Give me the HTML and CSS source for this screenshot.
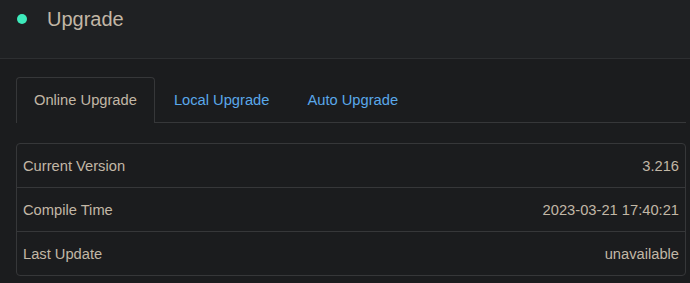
FILE: index.html
```html
<!DOCTYPE html>
<html lang="en">
<head>
    <meta charset="UTF-8">
    <meta name="viewport" content="width=device-width, initial-scale=1.0">
    <title>Upgrade</title>
    <link rel="stylesheet" href="styles.css">
</head>
<body>
    <div class="header">
        <span class="dot"></span>
        <h1>Upgrade</h1>
    </div>

    <div class="content">
        <div class="tabs">
            <a class="tab active">Online Upgrade</a>
            <a class="tab">Local Upgrade</a>
            <a class="tab">Auto Upgrade</a>
        </div>

        <div class="info">
            <div class="row">
                <span>Current Version</span>
                <span>3.216</span>
            </div>
            <div class="row">
                <span>Compile Time</span>
                <span>2023-03-21 17:40:21</span>
            </div>
            <div class="row">
                <span>Last Update</span>
                <span>unavailable</span>
            </div>
        </div>
    </div>
</body>
</html>
```

FILE: styles.css
```css
body {
    margin: 0;
    background: #1b1c1e;
    color: #c2b7a6;
    font-family: "Liberation Sans", Arial, sans-serif;
}

.header {
    display: flex;
    align-items: center;
    height: 59px;
    box-sizing: border-box;
    padding: 0 0 21px 17px;
    background: #1f2123;
    border-bottom: 1px solid #2d2f31;
}

.dot {
    width: 10px;
    height: 10px;
    border-radius: 50%;
    background: #3eebbc;
    margin-right: 20px;
}

h1 {
    margin: 0;
    font-size: 20px;
    font-weight: normal;
    line-height: 24px;
}

.content {
    padding: 18px 4px 0 16px;
}

.tabs {
    display: flex;
    border-bottom: 1px solid #363739;
    margin-bottom: 20px;
}

.tab {
    display: block;
    padding: 0 18px;
    height: 44px;
    line-height: 44px;
    font-size: 14.7px;
    color: #5aa8ea;
    border: 1px solid transparent;
    border-bottom: none;
    border-radius: 4px 4px 0 0;
    margin-bottom: -1px;
}

.tab.active {
    color: #c2b7a6;
    background: #1b1c1e;
    border-color: #363739;
    height: 45px;
    line-height: 45px;
    padding: 0 17px;
}

.info {
    border: 1px solid #363739;
    border-radius: 4px;
}

.row {
    display: flex;
    justify-content: space-between;
    align-items: center;
    height: 43px;
    padding: 0 6px;
    font-size: 14.7px;
    border-top: 1px solid #363739;
}

.row:first-child {
    border-top: none;
}
```
